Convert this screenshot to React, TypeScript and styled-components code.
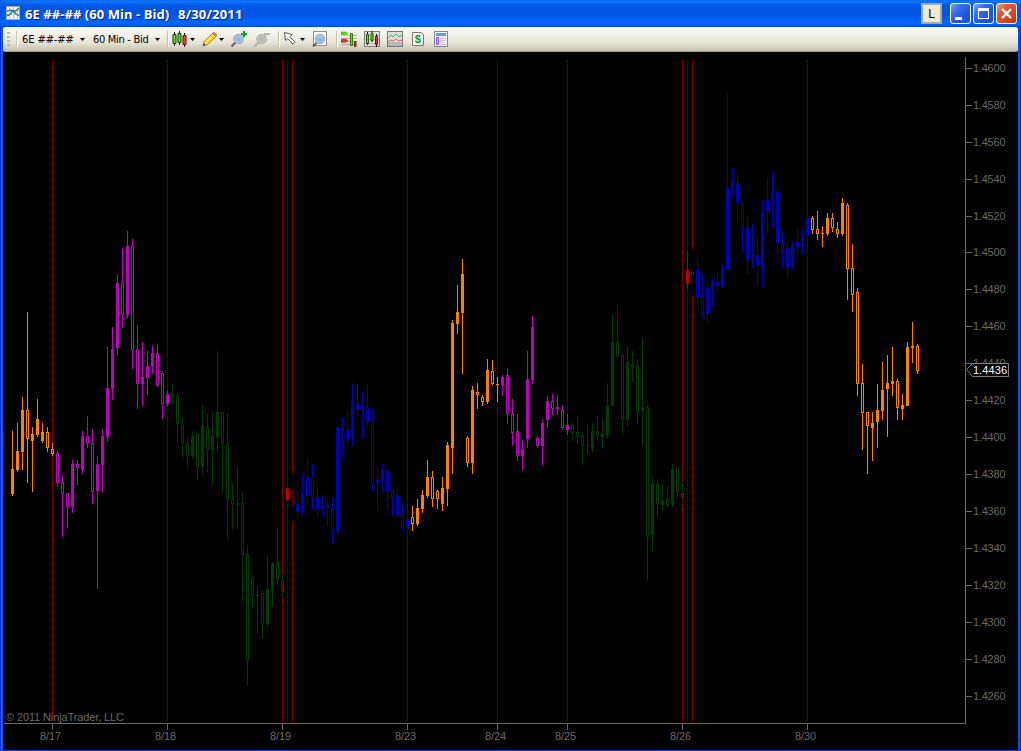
import React from "react";
import styled, { createGlobalStyle } from "styled-components";

const GlobalStyle = createGlobalStyle`
  html, body { margin: 0; padding: 0; background: #000; overflow: hidden; }
  * { box-sizing: border-box; }
`;

const Window = styled.div`
  width: 1021px;
  height: 751px;
  display: flex;
  flex-direction: column;
  background: #000;
  border-bottom: 1px solid #0842e0;
`;

const TitleBar = styled.header`
  height: 27px;
  flex: none;
  display: flex;
  align-items: center;
  padding: 0 4px 0 5px;
  background: linear-gradient(
    #0a5ae4 0, #0a7cff 1px, #0566f4 3px, #0055e5 6px, #0054e3 14px,
    #005bf0 18px, #0066ff 22px, #0062f8 25px, #0043cf 27px
  );
`;

const Title = styled.h1`
  margin: 0 0 0 4px;
  padding-top: 1px;
  display: flex;
  flex: 1;
  font: bold 13px/26px "Open Sans", "Noto Sans", sans-serif;
  color: #fff;
  text-shadow: 1px 1px 0 #0a1f7c;
  white-space: pre;
`;

const TitlePart = styled.span<{ $w: number; $spacing: number }>`
  width: ${(p) => p.$w}px;
  letter-spacing: ${(p) => p.$spacing}px;
`;

const LinkButton = styled.button`
  width: 21px;
  height: 21px;
  margin-right: 8px;
  padding: 0;
  border: 2px solid #aca899;
  background: #ece9d8;
  font: 12px/16px "Liberation Sans", sans-serif;
  color: #000;
`;

const CaptionButton = styled.button<{ $danger?: boolean }>`
  width: 21px;
  height: 21px;
  margin-right: 2px;
  padding: 0;
  border: 1px solid #fff;
  border-radius: 3px;
  background: ${(p) =>
    p.$danger
      ? "linear-gradient(135deg, #f0a088 0, #e2593a 30%, #d8431c 70%, #b83010 100%)"
      : "linear-gradient(135deg, #7ea6f4 0, #3a70e8 30%, #2058dc 65%, #1a50e0 100%)"};
  svg { display: block; }
  &:last-child { margin-right: 0; }
`;

const Body = styled.div`
  flex: 1;
  display: flex;
  flex-direction: column;
  border-left: 3px solid #0f5bea;
  border-right: 3px solid #0842e0;
  border-image: linear-gradient(90deg, #0831d9 0 1px, #166aee 1px 2px, #0855dd 2px 3px, #0855dd 3px 1018px, #0050f0 1018px 1020px, #0030c8 1020px) 0 3;
`;

const Toolbar = styled.nav`
  height: 25px;
  flex: none;
  display: flex;
  align-items: center;
  border-radius: 2px;
  border-bottom: 1px solid #a3a08a;
  background: linear-gradient(#fdfdfb 0, #f3f2ea 8px, #e6e3d6 16px, #cdcab8 22px, #c0bda8 24px);
`;

const Grip = styled.i`
  width: 3px;
  height: 15px;
  margin: 0 6px 0 4px;
  background: repeating-linear-gradient(#c1bdab 0 2px, transparent 2px 4px);
`;

const Separator = styled.i<{ $before?: number; $after?: number }>`
  width: 2px;
  height: 16px;
  margin: 0 ${(p) => p.$after ?? 4}px 0 ${(p) => p.$before ?? 6}px;
  border-left: 1px solid #c5c2b4;
  border-right: 1px solid #fff;
`;

const ToolText = styled.span<{ $w: number; $spacing?: number }>`
  width: ${(p) => p.$w}px;
  padding-top: 2px;
  font: 11px/22px "DejaVu Sans Condensed", "DejaVu Sans", sans-serif;
  letter-spacing: ${(p) => p.$spacing ?? 0}px;
  white-space: pre;
  color: #000;
`;

const Caret = styled.i<{ $before?: number; $after?: number }>`
  width: 5px;
  height: 3px;
  margin: 1px ${(p) => p.$after ?? 6}px 0 ${(p) => p.$before ?? 3}px;
  background: #000;
  clip-path: polygon(0 0, 100% 0, 50% 100%);
`;

const IconSvg = styled.svg<{ $after?: number }>`
  flex: none;
  display: block;
  width: 16px;
  height: 16px;
  margin-right: ${(p) => p.$after ?? 0}px;
`;

const ChartSvg = styled.svg`
  display: block;
  flex: none;
  width: 1015px;
  height: 698px;
  background: #000;
  font-family: "Liberation Sans", Arial, sans-serif;
  font-size: 11px;
`;

const Icon = ({ after, children }: { after?: number; children: React.ReactNode }) => (
  <IconSvg $after={after} viewBox="0 0 16 16">{children}</IconSvg>
);

const Lens = ({ gray, x = 0, y = 0 }: { gray?: boolean; x?: number; y?: number }) => (
  <g transform={`translate(${x} ${y})`}>
    <path d="M.5 15.5 5 11" stroke={gray ? "#b5b2aa" : "#5f5f63"} strokeWidth="2" />
    <circle cx="7.5" cy="8" r="4.6" fill={gray ? "#c4c2bd" : "#a9c4dc"} stroke={gray ? "#b4b2ac" : "#a6adb4"} strokeWidth="1.4" />
    <circle cx="7.5" cy="8.2" r="2.3" fill={gray ? "#b9b7b2" : "#7ebdf0"} />
  </g>
);

const COLORS = { o: "#ff8000", m: "#bf00bf", g: "#003c00", b: "#0000c0", r: "#c00000", k: "#000000" } as const;

type Session = { color: keyof typeof COLORS; start: number; bars: string };

// Each bar is "high,bodyTop,bodyBottom,low", with a trailing "h" when the body is hollow.
const SESSIONS: Session[] = [
  { color: "o", start: 12, bars: "431,469,494,496 423,451,470,472 397,410,452,470 312,410,439,483h 427,434,441,492 399,419,435,437 423,432,441,443 427,432,448,452h 443,449,454,456h" },
  { color: "m", start: 57, bars: "451,453,483,487h 475,482,494,537h 493,493,507,528h 460,464,507,513 460,464,468,485h 431,436,470,474 416,436,443,448h 429,443,492,504h 456,464,491,589 429,436,465,492 347,388,437,441 327,349,389,400 275,283,348,356 248,283,315,328h 231,246,315,319 239,246,350,369h 325,349,384,409h 342,377,384,406 351,366,378,395 346,353,367,374 344,353,385,387h 371,373,404,419h 390,394,404,406" },
  { color: "g", start: 172, bars: "383,395,396,404 392,395,424,441h 418,425,443,457h 438,443,456,467h 431,436,456,459 434,434,467,480h 405,425,467,474 414,427,450,472h 412,436,450,485 351,412,437,452 412,412,444,492h 414,443,500,539h 484,499,504,529h 467,503,505,529 493,503,555,601h 545,554,661,686h 573,578,596,607h 586,595,596,633 591,593,624,638h 556,589,624,627 562,563,592,607 528,562,579,585h 576,580,592,596h" },
  { color: "r", start: 287, bars: "488,488,500,500" },
  { color: "k", start: 292, bars: "473,489,506,522h" },
  { color: "b", start: 297, bars: "491,504,511,518h 473,493,509,515 458,477,496,505 464,477,498,509h 486,497,509,516h 495,506,509,515 501,506,507,526 497,508,531,544h 427,427,531,535 418,427,430,457h 410,429,439,444h 383,401,439,446 384,403,409,417h 392,407,409,437 384,407,422,426h 410,421,485,491h 467,479,483,511 464,469,480,491 469,471,492,509h 490,491,498,516h 486,495,515,518h 503,515,528,531h 514,519,528,531" },
  { color: "o", start: 412, bars: "506,517,524,531h 499,508,524,526 490,495,509,513 460,477,496,498 471,477,499,507h 490,491,499,509h 477,488,504,511 442,445,489,506 320,323,448,474 285,312,324,334 259,274,313,374 436,438,463,467h 386,390,463,474 383,392,395,409h 395,397,402,406h 359,370,402,404 360,371,384,385h 377,384,385,402" },
  { color: "m", start: 502, bars: "375,377,385,396 368,375,413,424h 399,414,433,446h 414,431,456,461h 440,449,456,470 351,379,439,448 316,327,380,384 436,438,446,448h 419,423,446,465 395,401,420,428 394,401,409,415h 395,407,409,415 405,410,428,430h 414,425,430,435" },
  { color: "g", start: 572, bars: "423,425,433,441h 416,432,437,443h 434,436,446,465h 423,445,446,454 423,431,448,452 416,431,435,441h 419,434,437,448 383,405,435,439 314,342,406,406 305,342,356,358h 355,355,420,433h 346,362,420,426 351,364,367,382h 359,366,413,424h 338,407,411,446 405,407,537,581h 477,484,535,552 479,484,504,518h 484,501,505,511 486,499,505,507h 464,469,505,507 467,467,492,498h 482,493,498,500h" },
  { color: "r", start: 687, bars: "251,270,284,289" },
  { color: "k", start: 692, bars: "249,272,275,294" },
  { color: "b", start: 697, bars: "259,270,297,302h 274,296,313,317h 281,288,313,324 277,281,289,308 272,281,286,291h 263,268,286,288 93,187,269,271 168,183,188,197 174,183,204,221h 203,203,228,251h 216,227,260,275h 224,255,260,267 237,255,265,284h 200,213,265,288 179,200,212,234 172,192,201,228 190,192,243,254h 231,244,251,267h 242,248,267,278h 242,246,267,269 229,242,247,254 229,233,241,254 213,218,236,240" },
  { color: "o", start: 812, bars: "216,218,230,234h 211,229,234,240h 226,233,234,247 213,218,234,236 213,218,228,232h 222,229,234,238h 198,203,234,236 203,205,269,300h 244,268,295,312h 288,292,384,396h 364,383,413,450h 412,412,426,474h 412,423,428,461 384,410,422,448 362,390,411,420 355,383,389,437 347,381,384,396 379,381,408,420h 394,405,409,420 342,347,406,406 322,346,348,363 344,346,371,374h" },
];

const Candles = () => (
  <g shapeRendering="crispEdges">
    {SESSIONS.map((s) =>
      s.bars.split(" ").map((bar, i) => {
        const hollow = bar.endsWith("h");
        const [high, top, bottom, low] = bar.replace("h", "").split(",").map(Number);
        const x = s.start + i * 5;
        const color = COLORS[s.color];
        return (
          <g key={x} fill={color}>
            <rect x={x} y={high} width={1} height={top - high} />
            <rect x={x} y={bottom} width={1} height={low - bottom} />
            {hollow ? (
              <rect x={x - 0.5} y={top + 0.5} width={2} height={bottom - top - 1} fill="none" stroke={color} />
            ) : (
              <rect x={x - 1} y={top} width={3} height={bottom - top} />
            )}
          </g>
        );
      })
    )}
    <path d="M691 272h1v1h1v-1h1v3h-1v-1h-1v1h-1z" fill="#a00000" />
  </g>
);

const PRICES = [68, 105, 142, 179, 216, 252, 289, 326, 363, 400, 437, 474, 511, 548, 585, 622, 659, 696];
const DATES: [number, string][] = [[52, "8/17"], [167, "8/18"], [282, "8/19"], [407, "8/23"], [497, "8/24"], [567, "8/25"], [682, "8/26"], [807, "8/30"]];
const GRID_LINES = [52, 167, 282, 287, 292, 407, 497, 567, 682, 687, 692, 807];

const Chart = () => (
  <ChartSvg viewBox="3 52 1015 698">
    <g shapeRendering="crispEdges" strokeDasharray="1 1">
      {GRID_LINES.map((x) => <path key={x} d={`M${x + 0.5} 60V722`} stroke="#900000" />)}
    </g>
    <Candles />
    <g shapeRendering="crispEdges" stroke="#696969" fill="none">
      <path d="M965.5 57V723M4 723.5H966" />
      {PRICES.map((y) => <path key={y} d={`M966 ${y + 0.5}h6`} />)}
      {DATES.map(([x]) => <path key={x} d={`M${x + 0.5} 724v6`} />)}
    </g>
    <g fill="#696969">
      {PRICES.map((y, i) => (
        <text key={y} x="973" y={y + 4} textLength="32.5">{(1.46 - i * 0.002).toFixed(4)}</text>
      ))}
      {DATES.map(([x, label]) => (
        <text key={x} x={x - 12} y="740" textLength="21">{label}</text>
      ))}
      <text x="6" y="721" textLength="118">© 2011 NinjaTrader, LLC</text>
    </g>
    <path d="M966.5 369.5 972.5 363.5H1008.5V376.5H972.5Z" fill="#000" stroke="#808080" />
    <text x="973" y="374" fill="#fff" textLength="34">1.4436</text>
  </ChartSvg>
);

export default function App() {
  return (
    <>
      <GlobalStyle />
      <Window>
        <TitleBar>
          <Icon>
            <rect x="1.5" y=".5" width="13" height="13" fill="#edf2f4" stroke="#a2aaa8" />
            <path d="M4.5 1v12M8.5 1v12M12.5 1v12M2 4.5h12M2 8.5h12" stroke="#c2cbc9" />
            <path d="M2 9.5 5 8.5 8 4.5 10 5.5 14 2" fill="none" stroke="#2c9440" strokeWidth="1.6" />
            <path d="M2 5.5 5 4 8 5 11.5 8.5 14 9.5" fill="none" stroke="#3c62b8" strokeWidth="1.3" />
          </Icon>
          <Title>
            <TitlePart $w={153} $spacing={0.06}>6E ##-## (60 Min - Bid)</TitlePart>
            <TitlePart $w={70} $spacing={0.2}>8/30/2011</TitlePart>
          </Title>
          <LinkButton>L</LinkButton>
          <CaptionButton>
            <svg width="19" height="19"><path d="M4 13h7v3H4z" fill="#fff" /></svg>
          </CaptionButton>
          <CaptionButton>
            <svg width="19" height="19"><path d="M4 4h11v11H4zM5 7v7h9V7z" fill="#fff" fillRule="evenodd" /></svg>
          </CaptionButton>
          <CaptionButton $danger>
            <svg width="19" height="19"><path d="M5 5l9 9M14 5l-9 9" stroke="#fff" strokeWidth="2.4" /></svg>
          </CaptionButton>
        </TitleBar>
        <Body>
          <Toolbar>
            <Grip />
            <Separator $before={0} $after={4} />
            <ToolText $w={54} $spacing={-0.08}>6E ##-##</ToolText>
            <Caret $before={4} $after={8} />
            <ToolText $w={58} $spacing={-0.3}>60 Min - Bid</ToolText>
            <Caret $before={4} $after={7} />
            <Separator $before={0} $after={3} />
            <Icon after={1}>
              <path d="M2.5 1v14M7.5 0v14M12.5 2v14" stroke="#111" />
              <path d="M1 3.5h3v9H1z" fill="#5edc28" stroke="#153d09" />
              <path d="M6 2.5h3v9H6z" fill="#5edc28" stroke="#153d09" />
              <path d="M11 4.5h3v9h-3z" fill="#f04030" stroke="#701008" />
            </Icon>
            <Caret $before={1} $after={7} />
            <Icon after={1}>
              <path d="M1 15l1.2-4.5L11 2l3.3 3-8.8 8.5z" fill="#ffd92b" stroke="#a1801a" />
              <path d="M3 11.5 11.5 3.5" stroke="#fff39a" />
              <path d="M10.5 2.5 12 1l3 3-1.5 1.5z" fill="#ee7b77" stroke="#a95856" strokeWidth=".6" />
              <path d="M1 15l.7-2.5L3.5 14z" fill="#333" />
            </Icon>
            <Caret $before={0} $after={7} />
            <Icon after={7}><Lens /><path d="M13 0v6M10 3h6" stroke="#00a52c" strokeWidth="2" /></Icon>
            <Icon after={7}><Lens gray /><path d="M10 3h6" stroke="#b7b4ac" strokeWidth="2" /></Icon>
            <Separator $before={1} $after={3} />
            <Icon after={1}>
              <path d="M1.5 1.5 2.5 9.5 4.8 7.6 10 13.2 12 11.2 6.8 5.8 9 3.5z" fill="#fff" stroke="#555" />
            </Icon>
            <Caret $before={0} $after={7} />
            <Icon after={8}>
              <rect x="1.5" y=".5" width="13" height="14" fill="#fff" stroke="#8c8c88" />
              <Lens x={0.5} y={0} />
            </Icon>
            <Separator $before={0} $after={3} />
            <Icon after={7}>
              <path d="M7 4.5h9M1 7.5h15M7 10.5h9M1 13.5h15" stroke="#aaa79b" />
              <path d="M0 1h5l2 1.5L5 4H0z" fill="#60df20" stroke="#398b10" strokeWidth=".5" />
              <path d="M0 8.2h5l2 1.5-2 1.5H0z" fill="#f02a20" stroke="#ab1710" strokeWidth=".5" />
              <path d="M9.5 2.5h2v12h-2z" fill="#60df20" stroke="#31780f" />
              <path d="M13.5 10.5h1.5v5h-1.5z" fill="#f02a20" stroke="#8f1911" />
            </Icon>
            <Icon after={7}>
              <rect x=".5" y=".5" width="15" height="15" fill="#deddd6" stroke="#817f78" />
              <path d="M1 4.5h14M1 8.5h14M1 12.5h14" stroke="#b4b1a6" />
              <path d="M3.5 1v13M8 0v11M12.5 3v13" stroke="#111" />
              <path d="M2.5 3.5h2v9h-2zM7 2.5h2v7H7z" fill="#60df20" stroke="#245b0d" />
              <path d="M11.5 5.5h2v8h-2z" fill="#f02a20" stroke="#731008" />
            </Icon>
            <Icon after={7}>
              <rect x=".5" y=".5" width="15" height="15" fill="#dddeda" stroke="#777" />
              <path d="M1 11h14v4H1z" fill="#b8bab8" />
              <path d="M1 7l3-3 2 2 3-3 3 3 3-2" stroke="#42ad77" fill="none" />
              <path d="M1 11l3-2 2 1 3-2 3 2 3-1" stroke="#e06262" fill="none" />
            </Icon>
            <Icon after={7}>
              <path d="M2.5 1.5h9l2 2v11h-11z" fill="#f8f8f6" stroke="#777" />
              <text x="4.8" y="12" fontSize="11" fontWeight="bold" fontFamily="Liberation Sans, sans-serif" fill="#219322">$</text>
            </Icon>
            <Icon>
              <rect x="1.5" y=".5" width="13" height="15" fill="#f1f1fb" stroke="#858599" />
              <path d="M3 2h10v3H3z" fill="#51a6d8" />
              <path d="M3.5 6.5h2v7h-2z" fill="#d6b4ff" stroke="#9948ff" />
              <path d="M7 7.5h6M7 9.5h6M7 11.5h4M7 13.5h6" stroke="#c5c5d0" />
            </Icon>
          </Toolbar>
          <Chart />
        </Body>
      </Window>
    </>
  );
}
